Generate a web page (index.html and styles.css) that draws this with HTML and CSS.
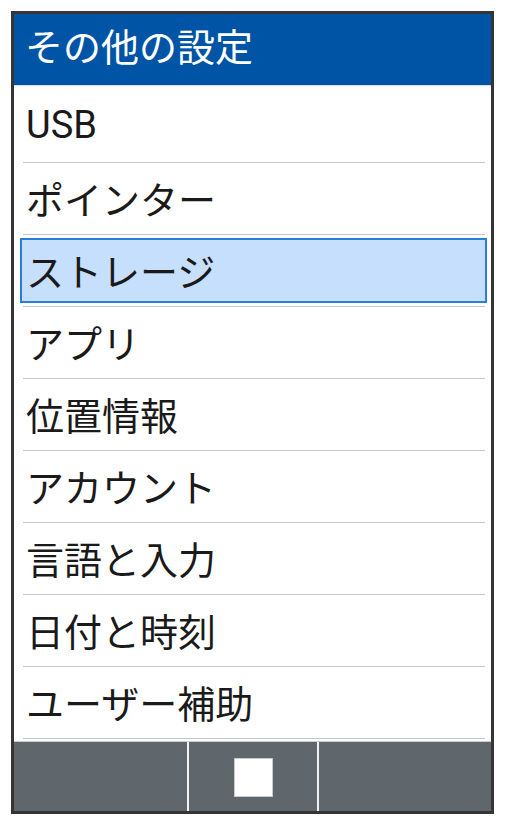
FILE: index.html
```html
<!DOCTYPE html>
<html lang="ja">
<head>
<meta charset="utf-8">
<link rel="stylesheet" href="styles.css">
</head>
<body>
<div class="phone">
  <header class="title">その他の設定</header>
  <ul class="list">
    <li class="item"><div class="cell">USB</div></li>
    <li class="item"><div class="cell">ポインター</div></li>
    <li class="item"><div class="cell selected">ストレージ</div></li>
    <li class="item"><div class="cell">アプリ</div></li>
    <li class="item"><div class="cell">位置情報</div></li>
    <li class="item"><div class="cell">アカウント</div></li>
    <li class="item"><div class="cell">言語と入力</div></li>
    <li class="item"><div class="cell">日付と時刻</div></li>
    <li class="item"><div class="cell">ユーザー補助</div></li>
  </ul>
  <footer class="softkeys">
    <div class="key"></div>
    <div class="key center"><span class="square"></span></div>
    <div class="key"></div>
  </footer>
</div>
</body>
</html>
```
FILE: styles.css
```css
html, body {
  margin: 0;
  padding: 0;
  background: #ffffff;
}
body {
  font-family: Roboto, "Noto Sans CJK JP", sans-serif;
}
.phone {
  margin: 11px 0 0 11px;
  width: 477px;
  height: 797px;
  border: 3px solid #353535;
  background: #ffffff;
  display: flex;
  flex-direction: column;
  box-sizing: content-box;
}
.title {
  height: 71px;
  background: #0054a6;
  color: #ffffff;
  font-size: 38px;
  line-height: 69px;
  padding-left: 11px;
  box-shadow: 0 1px 0 #d8dde3;
  flex: none;
}
.list {
  list-style: none;
  margin: 0;
  padding: 6px 0 0 0;
  flex: none;
}
.item {
  height: 72px;
  box-sizing: border-box;
  margin: 0 6px 0 9px;
  padding-top: 3px;
  border-bottom: 1px solid #c3c7c7;
}
.cell {
  height: 65px;
  margin: 0 -2px 0 -3px;
  box-sizing: border-box;
  border: 2px solid transparent;
  padding: 0 0 3px 4px;
  display: flex;
  align-items: center;
  font-size: 38px;
  color: #1a1a1a;
  white-space: nowrap;
}
.cell.selected {
  background: #c5dffd;
  border-color: #2b7ddc;
}
.softkeys {
  margin-top: 2px;
  border-top: 1px solid #c9cdcd;
  flex: 1;
  background: #5f676c;
  display: flex;
}
.key {
  width: 173px;
  flex: none;
}
.key.center {
  width: 128px;
  border-left: 2px solid #f2f2f2;
  border-right: 2px solid #f2f2f2;
  display: flex;
  align-items: center;
  justify-content: center;
}
.key:last-child {
  flex: 1;
}
.square {
  width: 37px;
  height: 37px;
  background: #ffffff;
  border: 1px solid #c7cacb;
  margin-top: 2px;
}
```
